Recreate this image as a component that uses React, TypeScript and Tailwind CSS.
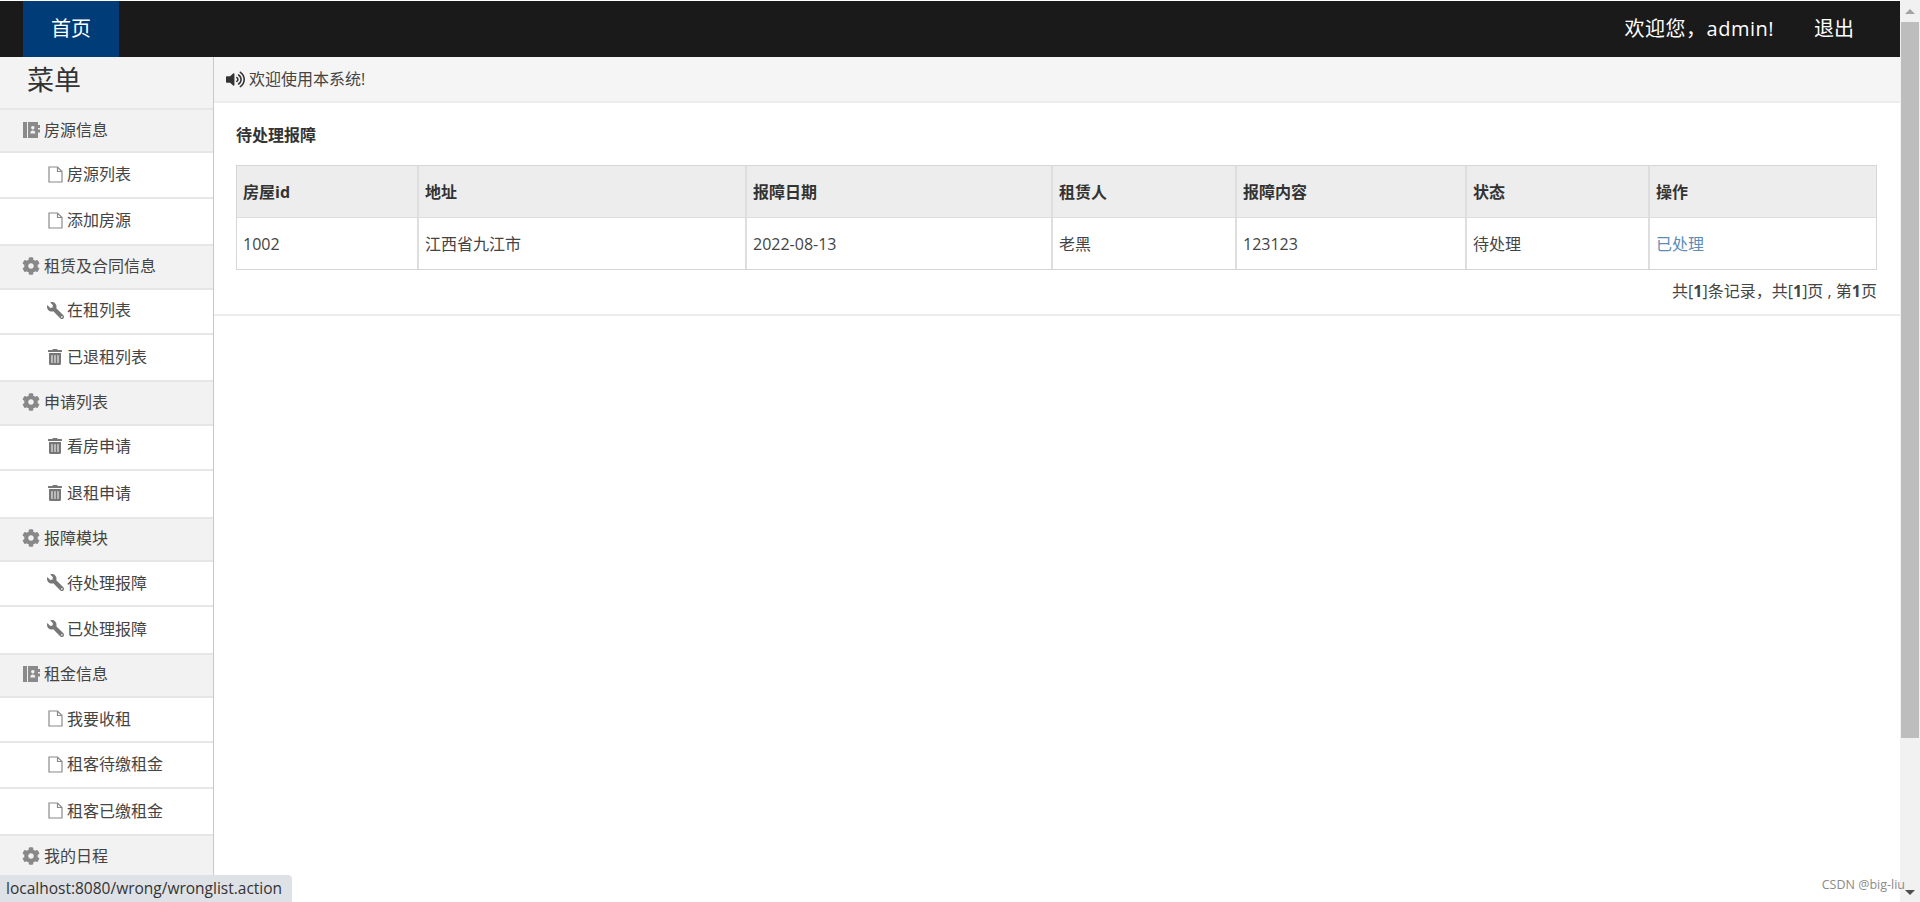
import { FaCog, FaTrashAlt, FaVolumeUp, FaWrench } from "react-icons/fa";

const font = { fontFamily: '"Open Sans", "Noto Sans CJK SC", sans-serif' };

type Item = { label: string; icon: "file" | "wrench" | "trash" };
type Section = { label: string; icon: "book" | "cog"; items: Item[] };

const sections: Section[] = [
  {
    label: "房源信息",
    icon: "book",
    items: [
      { label: "房源列表", icon: "file" },
      { label: "添加房源", icon: "file" },
    ],
  },
  {
    label: "租赁及合同信息",
    icon: "cog",
    items: [
      { label: "在租列表", icon: "wrench" },
      { label: "已退租列表", icon: "trash" },
    ],
  },
  {
    label: "申请列表",
    icon: "cog",
    items: [
      { label: "看房申请", icon: "trash" },
      { label: "退租申请", icon: "trash" },
    ],
  },
  {
    label: "报障模块",
    icon: "cog",
    items: [
      { label: "待处理报障", icon: "wrench" },
      { label: "已处理报障", icon: "wrench" },
    ],
  },
  {
    label: "租金信息",
    icon: "book",
    items: [
      { label: "我要收租", icon: "file" },
      { label: "租客待缴租金", icon: "file" },
      { label: "租客已缴租金", icon: "file" },
    ],
  },
  { label: "我的日程", icon: "cog", items: [] },
];

const columns = [
  { title: "房屋id", value: "1002", width: "w-[182px]" },
  { title: "地址", value: "江西省九江市", width: "w-[328px]" },
  { title: "报障日期", value: "2022-08-13", width: "w-[306px]" },
  { title: "租赁人", value: "老黑", width: "w-[184px]" },
  { title: "报障内容", value: "123123", width: "w-[230px]" },
  { title: "状态", value: "待处理", width: "w-[183px]" },
  { title: "操作", value: "已处理", width: "" },
];

// thin outline page with a folded corner
function FileIcon() {
  return (
    <svg width="15" height="17" viewBox="0 0 15 17" fill="none" stroke="#8a8a8a" strokeWidth="1.2">
      <path d="M1 1h8.5L14 5.5V16H1z" />
      <path d="M9.5 1v4.5H14" />
    </svg>
  );
}

// solid address book with a spine line and tabs on the right
function BookIcon() {
  return (
    <svg width="17" height="16" viewBox="0 0 17 16">
      <path
        fillRule="evenodd"
        fill="#8a8a8a"
        d="M0 0h4v16H0zM5 0h10v3h2v3h-2v1.5h2v3h-2V16H5zM9.8 4a1.7 1.7 0 1 0 .01 0zM7.3 11.5h5c0-2-1-3-2.5-3s-2.5 1-2.5 3z"
      />
    </svg>
  );
}

function ItemIcon({ icon }: { icon: Item["icon"] }) {
  if (icon === "wrench") return <FaWrench size={17} className="-scale-x-100 text-[#777]" />;
  if (icon === "trash") return <FaTrashAlt size={16} className="text-[#777]" />;
  return <FileIcon />;
}

function Sidebar() {
  return (
    <aside className="h-[845px] w-[214px] shrink-0 overflow-hidden border-r border-[#c8c8c8] bg-white">
      <div className="h-[51px] bg-[#f3f3f3] pl-[27px] text-[27px] leading-[46px] text-[#333]">菜单</div>
      {sections.map((section) => (
        <div key={section.label}>
          <div className="flex h-[45.4px] items-center gap-[4px] border-t-2 border-b-2 border-[#e6e6e6] bg-[#f2f2f2] pb-[2px] pl-[22px] text-base text-[#444]">
            <span className="flex w-[18px] justify-center">
              {section.icon === "book" ? <BookIcon /> : <FaCog size={18} className="text-[#888]" />}
            </span>
            <span>{section.label}</span>
          </div>
          {section.items.map((item) => (
            <div
              key={item.label}
              className="flex h-[45.4px] items-center gap-[3px] border-b-2 border-[#e6e6e6] bg-white pb-[2px] pl-[46px] text-base text-[#444] last:border-b-0"
            >
              <span className="flex w-[18px] justify-center">
                <ItemIcon icon={item.icon} />
              </span>
              <span>{item.label}</span>
            </div>
          ))}
        </div>
      ))}
    </aside>
  );
}

function Scrollbar() {
  return (
    <div className="flex w-[20px] shrink-0 flex-col items-center bg-[#f1f1f1]">
      <div className="flex h-[22px] w-full items-center justify-center">
        <div className="h-0 w-0 border-x-[5px] border-b-[5px] border-x-transparent border-b-[#a3a3a3]" />
      </div>
      <div className="h-[716px] w-[18px] bg-[#bdbdbd]" />
      <div className="flex-1" />
      <div className="flex h-[20px] w-full items-center justify-center">
        <div className="h-0 w-0 border-x-[5px] border-t-[5px] border-x-transparent border-t-[#4d4d4d]" />
      </div>
    </div>
  );
}

export default function App() {
  return (
    <div className="relative flex h-[902px] w-[1920px] overflow-hidden bg-white" style={font}>
      <div className="flex w-[1900px] flex-col">
        <header className="flex h-[57px] shrink-0 items-stretch justify-between border-t border-[#fff] bg-[#1a1a1a] pl-[23px] pr-[46px] text-[20px] text-white">
          <div className="flex w-[96px] items-center justify-center bg-[#003c78]">首页</div>
          <div className="flex items-center gap-[40px]">
            <span className="tracking-[0.5px]">欢迎您，admin!</span>
            <span>退出</span>
          </div>
        </header>
        <div className="flex flex-1">
          <Sidebar />
          <main className="flex-1">
            <div className="flex h-[46px] items-center gap-[4px] border-b-2 border-[#ececec] bg-[#f5f5f5] pl-[12px] text-base text-[#444]">
              <FaVolumeUp size={19} className="text-[#333]" />
              <span>欢迎使用本系统!</span>
            </div>
            <div className="border-b-2 border-[#ececec] px-[22px] pb-[11px]">
              <h2 className="h-[62px] pt-[20px] text-base leading-[24px] font-bold text-[#333]">待处理报障</h2>
              <div className="w-[1641px] border border-[#d6d6d6] text-base text-[#444]">
                <div className="flex h-[51px] items-center bg-[#ededed] font-bold text-[#333]">
                  {columns.map((c) => (
                    <div key={c.title} className={`${c.width || "flex-1"} flex h-full items-center border-r-2 border-[#dedede] pl-[6px] last:border-r-0`}>
                      {c.title}
                    </div>
                  ))}
                </div>
                <div className="flex h-[52px] items-center border-t border-[#dedede]">
                  {columns.map((c) => (
                    <div
                      key={c.title}
                      className={`${c.width || "flex-1"} flex h-full items-center border-r-2 border-[#dedede] pl-[6px] last:border-r-0 ${c.title === "操作" ? "text-[#5b8db8]" : ""}`}
                    >
                      {c.value}
                    </div>
                  ))}
                </div>
              </div>
              <p className="w-[1641px] pt-[9px] text-right text-base leading-[24px] text-[#444]">
                共[<b>1</b>]条记录，共[<b>1</b>]页 , 第<b>1</b>页
              </p>
            </div>
          </main>
        </div>
      </div>
      <Scrollbar />
      <div className="absolute bottom-0 left-0 flex h-[27px] w-[292px] items-center rounded-tr-[4px] bg-[#dee1e6] pl-[6px] text-[15.5px] text-[#333]">
        localhost:8080/wrong/wronglist.action
      </div>
      <div className="absolute right-[15px] bottom-[7px] text-[12.5px] text-[#8a8a8a]">CSDN @big-liu</div>
    </div>
  );
}
